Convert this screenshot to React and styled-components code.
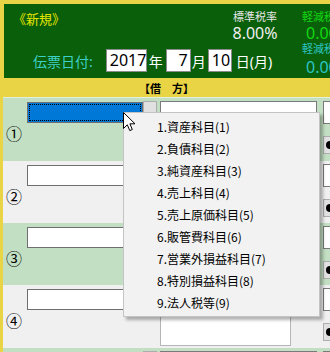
import React from 'react';
import styled, { createGlobalStyle } from 'styled-components';

const GlobalStyle = createGlobalStyle`
  html, body {
    margin: 0;
    padding: 0;
    background: #fff;
  }
  body {
    font-family: 'Noto Sans', 'Noto Sans CJK JP', sans-serif;
  }
`;

const Frame = styled.div`
  position: relative;
  width: 330px;
  height: 352px;
  overflow: hidden;
  background: #e8d444;
  padding: 4px 0 0 3px;
  box-sizing: border-box;
  display: flex;
  flex-direction: column;
`;

const Header = styled.div`
  height: 74px;
  margin-left: 1px;
  background: #0a5f0a;
  display: flex;
  flex-shrink: 0;
`;

const LeftPane = styled.div`
  width: 298px;
  flex-shrink: 0;
  box-sizing: border-box;
  padding: 7px 0 6px 9px;
  display: flex;
  flex-direction: column;
`;

const TopLine = styled.div`
  display: flex;
  justify-content: space-between;
  align-items: flex-start;
  padding-right: 25px;
`;

const Title = styled.div`
  font-size: 13px;
  line-height: 16px;
  color: #e6e600;
`;

const RateBlock = styled.div`
  display: flex;
  flex-direction: column;
  align-items: ${(p) => (p.$left ? 'flex-start' : 'center')};
  width: 44px;
  flex-shrink: 0;
  & + & {
    margin-top: 1px;
  }
`;

const RateLabel = styled.div`
  font-size: 11px;
  line-height: 14px;
  margin-top: -1px;
  color: ${(p) => p.$color};
  white-space: nowrap;
`;

const RateValue = styled.div`
  font-size: 16px;
  line-height: 18px;
  color: ${(p) => p.$color};
  white-space: nowrap;
  margin-top: ${(p) => p.$gap || 0}px;
  padding-left: ${(p) => p.$indent || 0}px;
`;

const DateRow = styled.div`
  margin-top: auto;
  display: flex;
  align-items: center;
  padding-left: 20px;
`;

const DateLabel = styled.span`
  font-size: 14px;
  color: #3ed0c6;
  margin-right: 13px;
  white-space: nowrap;
`;

const DateBox = styled.div`
  width: ${(p) => p.$width}px;
  height: 23px;
  box-sizing: border-box;
  background: #fff;
  border: 1px solid #8a8a8a;
  font-size: 16px;
  line-height: 21px;
  color: #000;
  text-align: ${(p) => p.$align || 'left'};
  padding: 0 2px 0 3px;
`;

const DateUnit = styled.span`
  font-size: 14px;
  color: #fff;
  margin: 0 ${(p) => p.$right || 3}px 0 ${(p) => p.$left || 2}px;
  white-space: nowrap;
`;

const ReducedPane = styled.div`
  display: flex;
  flex-direction: column;
  padding-top: 7px;
`;

const Band = styled.div`
  height: 19px;
  flex-shrink: 0;
  display: flex;
  align-items: center;
  justify-content: center;
  font-size: 11px;
  font-weight: bold;
  color: #000;
  font-family: 'Noto Sans CJK JP', sans-serif;
`;

const Rows = styled.div`
  display: flex;
  flex-direction: column;
  border-top: 1px solid #e4eede;
`;

const Row = styled.div`
  height: ${(p) => p.$h}px;
  flex-shrink: 0;
  background: ${(p) => (p.$green ? '#c3dfc3' : '#f0f0f0')};
  display: grid;
  grid-template-columns: 24px 133px 160px 1fr;
`;

const NumCell = styled.div`
  font-family: 'Noto Sans CJK JP', sans-serif;
  font-size: 16px;
  line-height: 18px;
  color: #000;
  padding: 26px 0 0 3px;
`;

const CodeCell = styled.div`
  display: flex;
  align-items: flex-start;
  padding-top: 4px;
`;

const CodeInput = styled.div`
  width: 116px;
  height: 21px;
  box-sizing: border-box;
  background: ${(p) => (p.$active ? '#0078d7' : '#fff')};
  border: 1px solid #6f6f6f;
  position: relative;
  &::after {
    content: '';
    display: ${(p) => (p.$active ? 'block' : 'none')};
    position: absolute;
    inset: 1px;
    border: 1px dotted #000;
  }
`;

const DotButton = styled.div`
  width: 14px;
  height: 21px;
  box-sizing: border-box;
  margin-top: -1px;
  background: #e1e1e1;
  border: 1px solid #adadad;
  font-size: 9px;
  line-height: 22px;
  text-align: center;
  color: #555;
`;

const NameCell = styled.div`
  display: flex;
  flex-direction: column;
  padding-top: 3px;
  padding-right: 3px;
`;

const NameInput = styled.div`
  height: 23px;
  box-sizing: border-box;
  background: #fff;
  border: 1px solid #7a7a7a;
`;

const NoteBox = styled.div`
  width: 131px;
  height: 32px;
  margin-top: 3px;
  box-sizing: border-box;
  background: #fff;
  border: 1px solid #b5b5b5;
`;

const SideCell = styled.div`
  display: flex;
  flex-direction: column;
  padding-top: 3px;
  padding-left: 3px;
`;

const SideInput = styled.div`
  height: 23px;
  box-sizing: border-box;
  background: #fff;
  border: 1px solid #7a7a7a;
  border-right: none;
`;

const SideButton = styled.div`
  height: 18px;
  margin-top: 12px;
  box-sizing: border-box;
  background: #e1e1e1;
  border: 1px solid #adadad;
  border-right: none;
  display: flex;
  align-items: center;
  padding-left: 1px;
`;

const Menu = styled.div`
  position: absolute;
  left: 123px;
  top: 112px;
  width: 197px;
  height: 205px;
  box-sizing: border-box;
  background: #f2f2f2;
  border: 1px solid #c4c4c4;
  box-shadow: 3px 3px 3px rgba(0, 0, 0, 0.3);
  padding-top: 3px;
`;

const MenuItem = styled.div`
  height: 22px;
  line-height: 22px;
  padding-left: 33px;
  font-family: 'Noto Sans CJK JP', sans-serif;
  font-size: 12px;
  color: #000;
  white-space: nowrap;
`;

const Cursor = styled.svg`
  position: absolute;
  left: 123px;
  top: 112px;
`;

const rows = [
  { n: '①', h: 63, green: true, active: true },
  { n: '②', h: 62 },
  { n: '③', h: 62, green: true },
  { n: '④', h: 63 },
  { n: '', h: 63, green: true },
];

const menuItems = [
  '1.資産科目(1)',
  '2.負債科目(2)',
  '3.純資産科目(3)',
  '4.売上科目(4)',
  '5.売上原価科目(5)',
  '6.販管費科目(6)',
  '7.営業外損益科目(7)',
  '8.特別損益科目(8)',
  '9.法人税等(9)',
];

const SpeakerIcon = () => (
  <svg width='8' height='10' viewBox='0 0 8 10'>
    <rect x='4' y='2' width='4' height='6' fill='#2bb5c8' />
    <path d='M5 1 A4 4 0 0 0 5 9 Z' fill='#000' />
  </svg>
);

const App = () => (
  <>
    <GlobalStyle />
    <Frame>
      <Header>
        <LeftPane>
          <TopLine>
            <Title>《新規》</Title>
            <RateBlock>
              <RateLabel $color='#e6e6e6'>標準税率</RateLabel>
              <RateValue $color='#f0f0f0'>8.00%</RateValue>
            </RateBlock>
          </TopLine>
          <DateRow>
            <DateLabel>伝票日付:</DateLabel>
            <DateBox $width={41}>2017</DateBox>
            <DateUnit $left={2} $right={3}>年</DateUnit>
            <DateBox $width={25} $align='right'>7</DateBox>
            <DateUnit $left={1} $right={2}>月</DateUnit>
            <DateBox $width={24} $align='right'>10</DateBox>
            <DateUnit $left={4}>日(月)</DateUnit>
          </DateRow>
        </LeftPane>
        <ReducedPane>
          <RateBlock $left>
            <RateLabel $color='#12d812'>軽減税率</RateLabel>
            <RateValue $color='#12d812' $indent={4}>0.00%</RateValue>
          </RateBlock>
          <RateBlock $left>
            <RateLabel $color='#2cc4c4'>軽減税率</RateLabel>
            <RateValue $color='#2cc4c4' $indent={4} $gap={2}>0.00%</RateValue>
          </RateBlock>
        </ReducedPane>
      </Header>
      <Band>【借　方】</Band>
      <Rows>
        {rows.map((r, i) => (
          <Row key={i} $h={r.h} $green={r.green}>
            <NumCell>{r.n}</NumCell>
            <CodeCell>
              <CodeInput $active={r.active} />
              <DotButton>··</DotButton>
            </CodeCell>
            <NameCell>
              <NameInput />
              <NoteBox />
            </NameCell>
            <SideCell>
              <SideInput />
              <SideButton>
                <SpeakerIcon />
              </SideButton>
            </SideCell>
          </Row>
        ))}
      </Rows>
      <Menu>
        {menuItems.map((m) => (
          <MenuItem key={m}>{m}</MenuItem>
        ))}
      </Menu>
      <Cursor width='13' height='20' viewBox='0 0 13 20'>
        <path
          d='M0.5 0.5 L0.5 16.5 L4.3 12.8 L6.8 18.6 L9.3 17.5 L6.9 11.8 L12 11.8 Z'
          fill='#fff'
          stroke='#000'
          strokeWidth='1'
          strokeLinejoin='miter'
        />
      </Cursor>
    </Frame>
  </>
);

export default App;
